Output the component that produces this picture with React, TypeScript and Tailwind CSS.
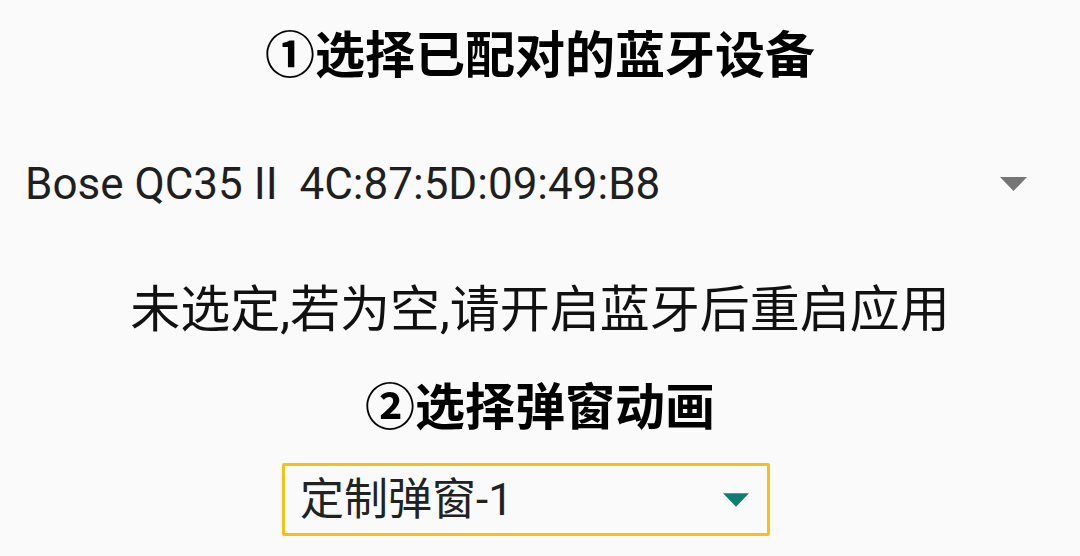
import React from "react";

// Android-style settings screen: paired device spinner + popup animation spinner

const font = { fontFamily: '"Roboto", "Noto Sans CJK SC", sans-serif' };

function Caret({ className }: { className: string }) {
  return (
    <svg viewBox="0 0 27 14" className={className}>
      <path d="M0 0 L27 0 L13.5 14 Z" fill="currentColor" />
    </svg>
  );
}

export default function App() {
  return (
    <div
      className="w-[1080px] h-[556px] bg-[#fafafa] text-[#1a1a1a] flex flex-col items-center overflow-hidden"
      style={font}
    >
      <h1 className="mt-[24px] h-[64px] text-[50px] leading-[64px] font-bold text-black">
        ①选择已配对的蓝牙设备
      </h1>

      <div className="mt-[64px] w-full h-[64px] flex items-center pl-[25px] pr-[53px]">
        <span className="flex-1 text-[44px] leading-[64px] text-[#1f1f1f]">
          Bose QC35 II&nbsp;&nbsp;4C:87:5D:09:49:B8
        </span>
        <Caret className="w-[27px] h-[14px] text-[#757575]" />
      </div>

      <p className="mt-[62px] h-[64px] text-[50px] leading-[64px] text-[#111]">
        未选定,若为空,请开启蓝牙后重启应用
      </p>

      <h2 className="mt-[34px] h-[64px] text-[50px] leading-[64px] font-bold text-black">
        ②选择弹窗动画
      </h2>

      <div className="mt-[23px] mr-[28px] w-[488px] h-[73px] border-[3px] border-[#f5c116] rounded-[2px] flex items-center pl-[15px] pr-[18px]">
        <span className="flex-1 text-[44px] leading-[60px] text-[#222]">定制弹窗-1</span>
        <Caret className="w-[26px] h-[14px] text-[#0e7f6e]" />
      </div>
    </div>
  );
}
